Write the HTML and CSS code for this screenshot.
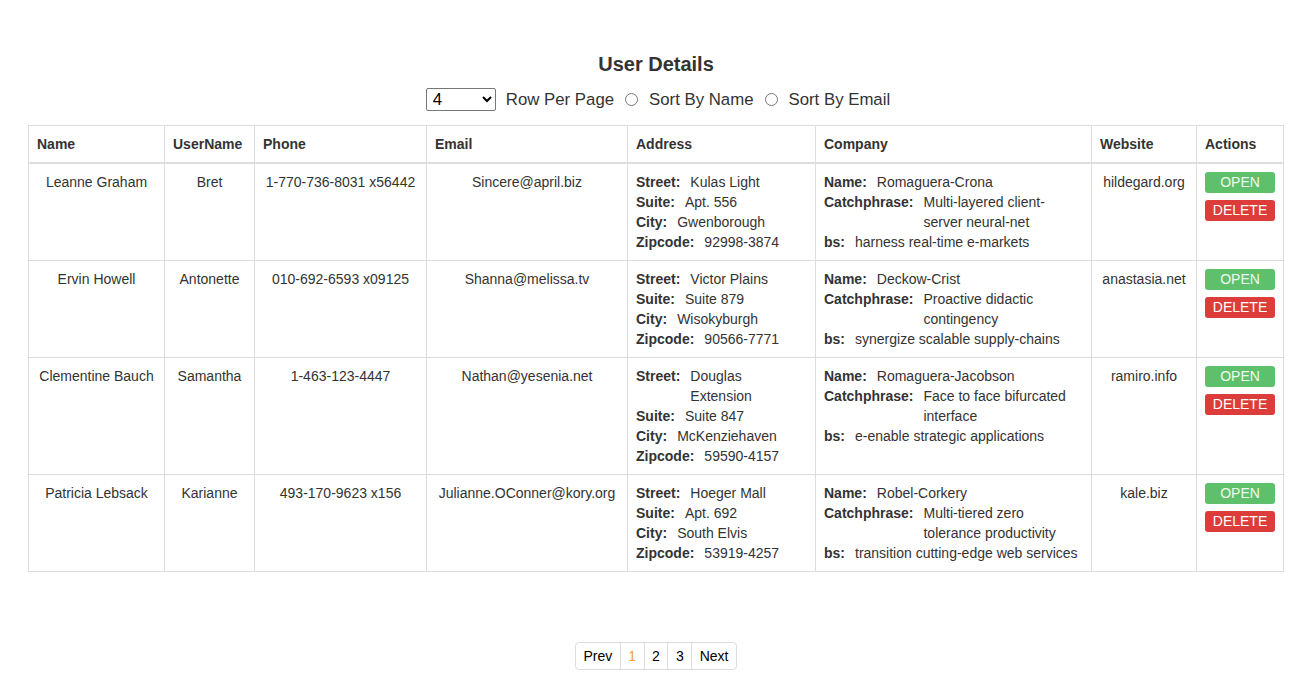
FILE: index.html
```html
<!DOCTYPE html>
<html lang="en">
<head>
<meta charset="utf-8">
<title>User Details</title>
<link rel="stylesheet" href="styles.css">
</head>
<body>
<div class="page">
  <h2 class="title">User Details</h2>
  <div class="controls">
    <select class="rows-select">
      <option>4</option>
      <option>8</option>
      <option>10</option>
    </select>
    <span class="ctl-label">Row Per Page</span>
    <input type="radio" name="sort" class="radio">
    <span class="ctl-label">Sort By Name</span>
    <input type="radio" name="sort" class="radio">
    <span class="ctl-label">Sort By Email</span>
  </div>

  <table class="users">
    <colgroup>
      <col class="c-name">
      <col class="c-user">
      <col class="c-phone">
      <col class="c-email">
      <col class="c-addr">
      <col class="c-comp">
      <col class="c-web">
      <col class="c-act">
    </colgroup>
    <thead>
      <tr>
        <th>Name</th>
        <th>UserName</th>
        <th>Phone</th>
        <th>Email</th>
        <th>Address</th>
        <th>Company</th>
        <th>Website</th>
        <th>Actions</th>
      </tr>
    </thead>
    <tbody>
      <tr>
        <td class="center">Leanne Graham</td>
        <td class="center">Bret</td>
        <td class="center">1-770-736-8031 x56442</td>
        <td class="center">Sincere@april.biz</td>
        <td>
          <div class="kv"><b>Street:</b><span class="v">Kulas Light</span></div>
          <div class="kv"><b>Suite:</b><span class="v">Apt. 556</span></div>
          <div class="kv"><b>City:</b><span class="v">Gwenborough</span></div>
          <div class="kv"><b>Zipcode:</b><span class="v">92998-3874</span></div>
        </td>
        <td>
          <div class="kv"><b>Name:</b><span class="v">Romaguera-Crona</span></div>
          <div class="kv"><b>Catchphrase:</b><span class="v">Multi-layered client-server neural-net</span></div>
          <div class="kv"><b>bs:</b><span class="v">harness real-time e-markets</span></div>
        </td>
        <td class="center">hildegard.org</td>
        <td><button class="btn open">OPEN</button><button class="btn delete">DELETE</button></td>
      </tr>
      <tr>
        <td class="center">Ervin Howell</td>
        <td class="center">Antonette</td>
        <td class="center">010-692-6593 x09125</td>
        <td class="center">Shanna@melissa.tv</td>
        <td>
          <div class="kv"><b>Street:</b><span class="v">Victor Plains</span></div>
          <div class="kv"><b>Suite:</b><span class="v">Suite 879</span></div>
          <div class="kv"><b>City:</b><span class="v">Wisokyburgh</span></div>
          <div class="kv"><b>Zipcode:</b><span class="v">90566-7771</span></div>
        </td>
        <td>
          <div class="kv"><b>Name:</b><span class="v">Deckow-Crist</span></div>
          <div class="kv"><b>Catchphrase:</b><span class="v">Proactive didactic contingency</span></div>
          <div class="kv"><b>bs:</b><span class="v">synergize scalable supply-chains</span></div>
        </td>
        <td class="center">anastasia.net</td>
        <td><button class="btn open">OPEN</button><button class="btn delete">DELETE</button></td>
      </tr>
      <tr>
        <td class="center">Clementine Bauch</td>
        <td class="center">Samantha</td>
        <td class="center">1-463-123-4447</td>
        <td class="center">Nathan@yesenia.net</td>
        <td>
          <div class="kv"><b>Street:</b><span class="v">Douglas Extension</span></div>
          <div class="kv"><b>Suite:</b><span class="v">Suite 847</span></div>
          <div class="kv"><b>City:</b><span class="v">McKenziehaven</span></div>
          <div class="kv"><b>Zipcode:</b><span class="v">59590-4157</span></div>
        </td>
        <td>
          <div class="kv"><b>Name:</b><span class="v">Romaguera-Jacobson</span></div>
          <div class="kv"><b>Catchphrase:</b><span class="v">Face to face bifurcated interface</span></div>
          <div class="kv"><b>bs:</b><span class="v">e-enable strategic applications</span></div>
        </td>
        <td class="center">ramiro.info</td>
        <td><button class="btn open">OPEN</button><button class="btn delete">DELETE</button></td>
      </tr>
      <tr>
        <td class="center">Patricia Lebsack</td>
        <td class="center">Karianne</td>
        <td class="center">493-170-9623 x156</td>
        <td class="center">Julianne.OConner@kory.org</td>
        <td>
          <div class="kv"><b>Street:</b><span class="v">Hoeger Mall</span></div>
          <div class="kv"><b>Suite:</b><span class="v">Apt. 692</span></div>
          <div class="kv"><b>City:</b><span class="v">South Elvis</span></div>
          <div class="kv"><b>Zipcode:</b><span class="v">53919-4257</span></div>
        </td>
        <td>
          <div class="kv"><b>Name:</b><span class="v">Robel-Corkery</span></div>
          <div class="kv"><b>Catchphrase:</b><span class="v">Multi-tiered zero tolerance productivity</span></div>
          <div class="kv"><b>bs:</b><span class="v">transition cutting-edge web services</span></div>
        </td>
        <td class="center">kale.biz</td>
        <td><button class="btn open">OPEN</button><button class="btn delete">DELETE</button></td>
      </tr>
    </tbody>
  </table>

  <nav class="pager-wrap">
    <ul class="pager">
      <li><a>Prev</a></li>
      <li><a class="active">1</a></li>
      <li><a>2</a></li>
      <li><a>3</a></li>
      <li><a>Next</a></li>
    </ul>
  </nav>
</div>
</body>
</html>
```

FILE: styles.css
```css
* { box-sizing: border-box; }

html, body {
  margin: 0;
  padding: 0;
  background: #fff;
}

body {
  font-family: "Liberation Sans", Arial, Helvetica, sans-serif;
  font-size: 14px;
  line-height: 20px;
  color: #333;
}

.page {
  padding: 53px 29px 0 28px;
}

.title {
  margin: 0;
  font-size: 20px;
  line-height: 22px;
  font-weight: bold;
  text-align: center;
  color: #333;
}

.controls {
  margin-top: 13px;
  padding-left: 4px;
  height: 23px;
  display: flex;
  justify-content: center;
  align-items: center;
  font-size: 16.8px;
}

.rows-select {
  width: 70px;
  height: 23px;
  font-family: inherit;
  font-size: 16.8px;
  color: #000;
  border: 1px solid #767676;
  border-radius: 2px;
  background: #fff;
  padding: 0 0 0 2px;
  margin: 0 10px 0 0;
}

.ctl-label {
  line-height: 23px;
}

.radio {
  width: 13px;
  height: 13px;
  margin: 0 11px 0 11px;
}

.users {
  margin-top: 14px;
  width: 100%;
  border-collapse: collapse;
  table-layout: fixed;
  border: 1px solid #ddd;
}

.c-name { width: 136px; }
.c-user { width: 90px; }
.c-phone { width: 172px; }
.c-email { width: 201px; }
.c-addr { width: 188px; }
.c-comp { width: 276px; }
.c-web { width: 105px; }
.c-act { width: 87px; }

.users th,
.users td {
  border: 1px solid #ddd;
  padding: 8px;
  vertical-align: top;
  line-height: 20px;
}

.users th {
  text-align: left;
  font-weight: bold;
  border-bottom: 2px solid #ddd;
}

.users td.center {
  text-align: center;
}

.kv {
  display: flex;
  gap: 10px;
}

.kv b {
  flex: none;
  font-weight: bold;
}

.kv .v {
  flex: 1 1 auto;
  min-width: 0;
  padding-right: 3px;
}

.btn {
  display: block;
  width: 100%;
  height: 21px;
  border: 0;
  border-radius: 3px;
  padding: 0;
  font-family: inherit;
  font-size: 14px;
  line-height: 21px;
  color: #fff;
  text-align: center;
  cursor: pointer;
}

.btn.open {
  background: #5fc06c;
  color: #eefaf0;
}

.btn.delete {
  margin-top: 7px;
  background: #dc3c3a;
}

.pager-wrap {
  margin-top: 70px;
  display: flex;
  justify-content: center;
}

.pager {
  list-style: none;
  margin: 0;
  padding: 0;
  display: flex;
  border: 1px solid #ddd;
  border-radius: 4px;
}

.pager li + li {
  border-left: 1px solid #ddd;
}

.pager a {
  display: block;
  padding: 3px 7.5px;
  line-height: 20px;
  font-size: 14px;
  color: #000;
  cursor: pointer;
}

.pager a.active {
  color: #f39a3e;
}
```
